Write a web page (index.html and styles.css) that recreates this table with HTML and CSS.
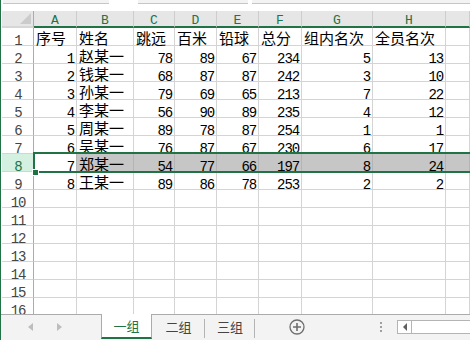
FILE: index.html
```html
<!DOCTYPE html>
<html lang="zh">
<head>
<meta charset="utf-8">
<title>Sheet</title>
<link rel="stylesheet" href="styles.css">
</head>
<body>
<div class="app">
  <div class="fbar"><span class="seg s1"></span><span class="seg s2"></span><span class="seg s3"></span></div>
  <div class="sheet">
    <div class="row head">
      <div class="c corner"></div>
      <div class="c h">A</div><div class="c h">B</div><div class="c h">C</div><div class="c h">D</div>
      <div class="c h">E</div><div class="c h">F</div><div class="c h">G</div><div class="c h">H</div><div class="c h last"></div>
    </div>
    <div class="row">
      <div class="c rh">1</div>
      <div class="c t">序号</div><div class="c t">姓名</div><div class="c t">跳远</div><div class="c t">百米</div>
      <div class="c t">铅球</div><div class="c t">总分</div><div class="c t">组内名次</div><div class="c t">全员名次</div><div class="c"></div>
    </div>
    <div class="row">
      <div class="c rh">2</div>
      <div class="c n">1</div><div class="c t">赵某一</div><div class="c n">78</div><div class="c n">89</div>
      <div class="c n">67</div><div class="c n">234</div><div class="c n">5</div><div class="c n">13</div><div class="c"></div>
    </div>
    <div class="row">
      <div class="c rh">3</div>
      <div class="c n">2</div><div class="c t">钱某一</div><div class="c n">68</div><div class="c n">87</div>
      <div class="c n">87</div><div class="c n">242</div><div class="c n">3</div><div class="c n">10</div><div class="c"></div>
    </div>
    <div class="row">
      <div class="c rh">4</div>
      <div class="c n">3</div><div class="c t">孙某一</div><div class="c n">79</div><div class="c n">69</div>
      <div class="c n">65</div><div class="c n">213</div><div class="c n">7</div><div class="c n">22</div><div class="c"></div>
    </div>
    <div class="row">
      <div class="c rh">5</div>
      <div class="c n">4</div><div class="c t">李某一</div><div class="c n">56</div><div class="c n">90</div>
      <div class="c n">89</div><div class="c n">235</div><div class="c n">4</div><div class="c n">12</div><div class="c"></div>
    </div>
    <div class="row">
      <div class="c rh">6</div>
      <div class="c n">5</div><div class="c t">周某一</div><div class="c n">89</div><div class="c n">78</div>
      <div class="c n">87</div><div class="c n">254</div><div class="c n">1</div><div class="c n">1</div><div class="c"></div>
    </div>
    <div class="row">
      <div class="c rh">7</div>
      <div class="c n">6</div><div class="c t">吴某一</div><div class="c n">76</div><div class="c n">87</div>
      <div class="c n">67</div><div class="c n">230</div><div class="c n">6</div><div class="c n">17</div><div class="c"></div>
    </div>
    <div class="row selrow">
      <div class="c rh">8</div>
      <div class="c n active">7</div><div class="c t">郑某一</div><div class="c n">54</div><div class="c n">77</div>
      <div class="c n">66</div><div class="c n">197</div><div class="c n">8</div><div class="c n">24</div><div class="c"></div>
    </div>
    <div class="row">
      <div class="c rh">9</div>
      <div class="c n">8</div><div class="c t">王某一</div><div class="c n">89</div><div class="c n">86</div>
      <div class="c n">78</div><div class="c n">253</div><div class="c n">2</div><div class="c n">2</div><div class="c"></div>
    </div>
    <div class="row"><div class="c rh">10</div><div class="c"></div><div class="c"></div><div class="c"></div><div class="c"></div><div class="c"></div><div class="c"></div><div class="c"></div><div class="c"></div><div class="c"></div></div>
    <div class="row"><div class="c rh">11</div><div class="c"></div><div class="c"></div><div class="c"></div><div class="c"></div><div class="c"></div><div class="c"></div><div class="c"></div><div class="c"></div><div class="c"></div></div>
    <div class="row"><div class="c rh">12</div><div class="c"></div><div class="c"></div><div class="c"></div><div class="c"></div><div class="c"></div><div class="c"></div><div class="c"></div><div class="c"></div><div class="c"></div></div>
    <div class="row"><div class="c rh">13</div><div class="c"></div><div class="c"></div><div class="c"></div><div class="c"></div><div class="c"></div><div class="c"></div><div class="c"></div><div class="c"></div><div class="c"></div></div>
    <div class="row"><div class="c rh">14</div><div class="c"></div><div class="c"></div><div class="c"></div><div class="c"></div><div class="c"></div><div class="c"></div><div class="c"></div><div class="c"></div><div class="c"></div></div>
    <div class="row"><div class="c rh">15</div><div class="c"></div><div class="c"></div><div class="c"></div><div class="c"></div><div class="c"></div><div class="c"></div><div class="c"></div><div class="c"></div><div class="c"></div></div>
    <div class="row"><div class="c rh">16</div><div class="c"></div><div class="c"></div><div class="c"></div><div class="c"></div><div class="c"></div><div class="c"></div><div class="c"></div><div class="c"></div><div class="c"></div></div>
    <div class="selbox"></div>
    <div class="handle"></div>
  </div>
  <div class="tabs">
    <div class="nav"><span class="al"></span><span class="ar"></span></div>
    <div class="tab on">一组</div>
    <div class="tab sep w2">二组</div>
    <div class="tab sep w3">三组</div>
    <svg class="plus" width="16" height="16" viewBox="0 0 16 16"><circle cx="8" cy="8" r="7" fill="none" stroke="#6e6e6e" stroke-width="1.3"/><path d="M8 4v8M4 8h8" stroke="#6e6e6e" stroke-width="1.6"/></svg>
    <div class="dots"><i></i><i></i><i></i></div>
    <div class="hscroll"><span class="sa"><span class="tri"></span></span><span class="track"></span></div>
  </div>
</div>
</body>
</html>
```
FILE: styles.css
```css
* { box-sizing: border-box; margin: 0; padding: 0; }
html, body { width: 470px; height: 340px; overflow: hidden; background: #fff; }
body { font-family: "Liberation Sans", "Noto Sans CJK SC", sans-serif; color: #000; }

.app { height: 340px; border-left: 1px solid #217346; display: flex; flex-direction: column; overflow: hidden; }

.fbar { height: 4px; display: flex; padding-left: 2px; flex: none; }
.seg { height: 4px; background: #f3f3f3; border-bottom: 1px solid #c6c6c6; }
.s1 { width: 106px; }
.s2 { margin-left: 29px; width: 110px; }
.s3 { margin-left: 4px; flex: 1; }

.sheet { margin-top: 7px; height: 303px; overflow: hidden; position: relative; padding-left: 1px; flex: none; }

.row { display: grid; grid-template-columns: 32px 43px 57px 41px 42px 42px 43px 71px 73px 1fr; height: 18px; }
.c { border-right: 1px solid #d4d4d4; border-bottom: 1px solid #d4d4d4; display: flex; align-items: flex-end; white-space: nowrap; min-width: 0; }

.head { height: 17px; }
.head .c { background: #e6e6e6; border-right-color: #cdcdcd; border-bottom: 2px solid #217346; }
.head .corner { position: relative; border-bottom-color: #d6d6d6; border-right-color: #ababab; }
.corner::after { content: ""; position: absolute; right: 2px; bottom: 2px; width: 11px; height: 11px; background: #cbcbcb; clip-path: polygon(100% 0, 100% 100%, 0 100%); }
.h { justify-content: center; color: #217346; font-family: "Liberation Mono", monospace; font-size: 13px; line-height: 8px; padding-bottom: 1px; }

.rh { justify-content: center; color: #454545; border-right-color: #ababab; font-family: "Liberation Mono", monospace; font-size: 14px; letter-spacing: -1.1px; line-height: 8px; padding-left: 1px; }
.n { justify-content: flex-end; font-family: "Liberation Mono", monospace; font-size: 14px; letter-spacing: -1.1px; line-height: 8px; padding-right: 2px; }
.t { font-family: "Liberation Sans", "Noto Sans CJK SC", sans-serif; font-size: 15px; line-height: 13px; padding-left: 2px; }

.selrow .c { background: #c6c6c6; border-right-color: #b4b4b4; }
.selrow .rh { background: #d3f0e0; color: #217346; }
.selrow .active { background: #fff; }

.selbox { position: absolute; left: 32px; top: 141px; right: -4px; height: 21px; border: 2px solid #217346; }
.handle { position: absolute; left: 31px; top: 158px; width: 7px; height: 7px; background: #217346; border: 1px solid #fff; }

.tabs { height: 26px; flex: none; background: #f3f3f3; border-top: 1px solid #ababab; display: flex; align-items: center; padding-bottom: 1px; }
.nav { width: 100px; align-self: stretch; display: flex; align-items: center; }
.al { margin-left: 27px; width: 0; height: 0; border-top: 4px solid transparent; border-bottom: 4px solid transparent; border-right: 5px solid #bdbdbd; }
.ar { margin-left: 24px; width: 0; height: 0; border-top: 4px solid transparent; border-bottom: 4px solid transparent; border-left: 5px solid #bdbdbd; }

.tab { align-self: stretch; display: flex; align-items: center; justify-content: center; font-size: 13px; line-height: 15px; color: #444; position: relative; }
.tab.on { width: 51px; margin-top: -1px; background: #fff; border-left: 1px solid #ababab; border-right: 1px solid #ababab; border-bottom: 2px solid #217346; color: #217346; padding-top: 1px; }
.w2 { width: 53px; }
.w3 { width: 50px; }
.sep::after { content: ""; position: absolute; right: 0; top: 4px; bottom: 1px; width: 1px; background: #b4b4b4; }

.plus { margin-left: 34px; flex: none; }
.dots { margin-left: 75px; display: flex; flex-direction: column; gap: 2px; }
.dots i { display: block; width: 2px; height: 2px; background: #a0a0a0; }
.hscroll { margin-left: 15px; flex: 1; height: 14px; display: flex; border: 1px solid #b4b4b4; border-right: none; background: #fff; }
.sa { width: 14px; border-right: 1px solid #b4b4b4; display: flex; align-items: center; justify-content: center; }
.tri { width: 0; height: 0; border-top: 4px solid transparent; border-bottom: 4px solid transparent; border-right: 4px solid #606060; }
.track { flex: 1; }
```
